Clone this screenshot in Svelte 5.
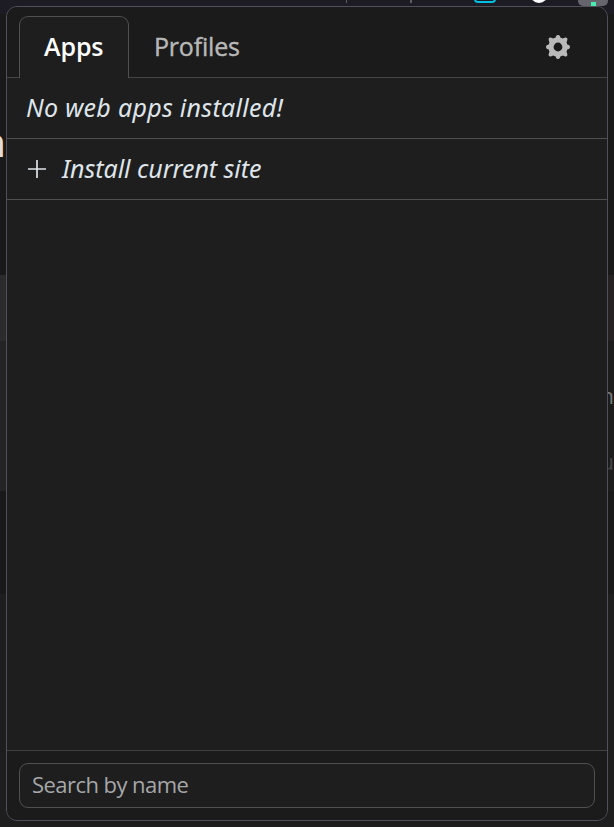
<script>
  let tab = $state('Apps');
  let query = $state('');
</script>

<div class="page">
  <div class="toolbar" aria-hidden="true">
    <i class="tick one"></i><i class="tick two"></i>
    <i class="frame"></i><i class="disc"></i><i class="button"><b></b></i>
  </div>
  <div class="backdrop left" aria-hidden="true">
    <i class="dark"></i><i class="band"></i><i class="card"></i><i class="low"></i><i class="base"></i>
    <span class="big">n</span>
  </div>
  <div class="backdrop right" aria-hidden="true">
    <i class="dark"></i><i class="band"></i><i class="card"></i><i class="low"></i><i class="base"></i>
    <span class="small">n</span><span class="small dim">u</span>
  </div>

  <main class="popup">
    <header>
      <nav>
        <button class="tab apps" class:active={tab === 'Apps'} onclick={() => (tab = 'Apps')}><span>Apps</span></button>
        <button class="tab profiles" class:active={tab === 'Profiles'} onclick={() => (tab = 'Profiles')}><span>Profiles</span></button>
      </nav>
      <button class="settings" aria-label="Settings">
        <svg width="24" height="24" viewBox="-12 -12 24 24">
          <path fill="#bababb" fill-rule="evenodd" d="M-1.9-10.8Q-1.5-12 0-12T1.9-10.8L2.6-9.2Q3.8-9 4.8-8.5L6.6-9.2Q8.2-9.7 9-9T9.2-6.6L8.5-4.8Q9-3.8 9.2-2.6L10.8-1.9Q12-1.5 12 0T10.8 1.9L9.2 2.6Q9 3.8 8.5 4.8L9.2 6.6Q9.7 8.2 9 9T6.6 9.2L4.8 8.5Q3.8 9 2.6 9.2L1.9 10.8Q1.5 12 0 12T-1.9 10.8L-2.6 9.2Q-3.8 9-4.8 8.5L-6.6 9.2Q-8.2 9.7-9 9T-9.2 6.6L-8.5 4.8Q-9 3.8-9.2 2.6L-10.8 1.9Q-12 1.5-12 0T-10.8-1.9L-9.2-2.6Q-9-3.8-8.5-4.8L-9.2-6.6Q-9.7-8.2-9-9T-6.6-9.2L-4.8-8.5Q-3.8-9-2.6-9.2ZM0-4.4A4.4 4.4 0 1 0 0 4.4A4.4 4.4 0 1 0 0-4.4Z" />
        </svg>
      </button>
    </header>
    <section>
      <div class="row"><em class="none">No web apps installed!</em></div>
      <div class="row">
        <svg class="plus" width="18" height="18" viewBox="0 0 18 18"><path d="M0 9H18M9 0V18" stroke="#e0e4e8" stroke-width="1.7" /></svg>
        <em class="install">Install current site</em>
      </div>
    </section>
    <footer><input bind:value={query} placeholder="Search by name" /></footer>
  </main>
</div>

<style>
  :global(body) { background: #1e1e1f; overflow: hidden; }
  .page {
    position: relative;
    box-sizing: border-box;
    width: 614px;
    height: 827px;
    padding: 6px;
    overflow: hidden;
    background: #1e1e1f;
    font-family: "Open Sans", "Noto Sans", sans-serif;
  }
  .toolbar { position: absolute; inset: 0 0 auto; height: 14px; background: #1d1c24; }
  .toolbar i { position: absolute; top: 0; }
  .tick { width: 1px; height: 3px; background: #5d5c65; }
  .one { left: 346px; }
  .two { left: 410px; width: 2px; }
  .toolbar .frame { left: 474px; top: -6px; width: 18px; height: 5px; border: 2px solid #00c0e4; border-radius: 0 0 4px 4px; }
  .disc { left: 530px; width: 18px; height: 18px; margin-top: -15px; border-radius: 50%; background: #fff; }
  .button { left: 578px; width: 30px; height: 6px; border-radius: 0 0 5px 5px; background: #66646c; }
  .button b { position: absolute; left: 13px; top: 2px; width: 5px; height: 4px; background: #46edab; }

  .backdrop { position: absolute; top: 14px; bottom: 0; width: 12px; display: flex; flex-direction: column; }
  .backdrop.left { left: 0; }
  .backdrop.right { right: 0; }
  .dark { height: 261px; background: #19191a; }
  .band { height: 66px; background: #2b2b2c; }
  .right .band { background: #252123; }
  .card { height: 150px; background: #242425; }
  .right .card { background: #1c1c1d; }
  .low { height: 103px; background: #19191a; }
  .base { flex: 1; background: #1e1e1f; }
  .big { position: absolute; right: 6px; top: 99px; font-size: 40px; line-height: 57px; color: #e2ddd6; }
  .small { position: absolute; right: 0; top: 366px; font-size: 22px; line-height: 30px; color: #777; }
  .dim { top: 432px; color: #444; }

  .popup {
    position: relative;
    box-sizing: border-box;
    width: 602px;
    height: 815px;
    display: flex;
    flex-direction: column;
    overflow: hidden;
    border: 1px solid #514f5a;
    border-radius: 11px;
    background: #1e1e1e;
  }
  header {
    box-sizing: border-box;
    height: 71px;
    flex: none;
    display: flex;
    align-items: flex-end;
    justify-content: space-between;
    padding: 0 37px 0 12px;
    background: #1b1b1b;
    box-shadow: inset 0 -1px #444;
  }
  nav { display: flex; }
  button { padding: 0; border: 0; background: none; font: inherit; }
  .tab {
    box-sizing: border-box;
    height: 62px;
    padding: 0 0 3px;
    border: 1px solid transparent;
    border-bottom: 0;
    border-radius: 9px 9px 0 0;
    font-size: 25px;
    line-height: 34px;
    color: #b8b8b8;
    text-align: left;
    white-space: nowrap;
    font-weight: 500;
    -webkit-text-stroke: .4px currentColor;
  }
  .tab.active { border-color: #505050; background: #1e1e1e; color: #fff; font-weight: 600; -webkit-text-stroke: 0; }
  .apps { width: 110px; padding-left: 24px; letter-spacing: -.1px; }
  .profiles { padding-left: 24px; letter-spacing: -.2px; }
  .settings { width: 24px; height: 24px; margin-bottom: 19px; }
  .settings svg { display: block; }
  .row {
    box-sizing: border-box;
    height: 61px;
    display: flex;
    align-items: center;
    padding: 0 19px;
    border-bottom: 1px solid #505050;
    color: #dfe5ea;
    font-size: 25px;
    line-height: 34px;
    white-space: nowrap;
  }
  .plus { margin: 0 16px 1px 2px; flex: none; }
  em { font-family: "Noto Sans", "Open Sans", sans-serif; padding-bottom: 2px; }
  .none { letter-spacing: .3px; }
  .install { letter-spacing: -.04px; }
  footer {
    box-sizing: border-box;
    height: 70px;
    margin-top: auto;
    padding: 12px;
    border-top: 1px solid #414141;
    background: #1b1b1b;
  }
  input {
    display: block;
    box-sizing: border-box;
    width: 576px;
    height: 45px;
    padding: 0 12px 3px;
    border: 1px solid #505050;
    border-radius: 9px;
    outline: 0;
    background: #1e1e1e;
    color: #dfe5ea;
    font: 22px "Open Sans", "Noto Sans", sans-serif;
    letter-spacing: -.55px;
  }
  input::placeholder { color: #a5a7a9; opacity: 1; }
</style>
